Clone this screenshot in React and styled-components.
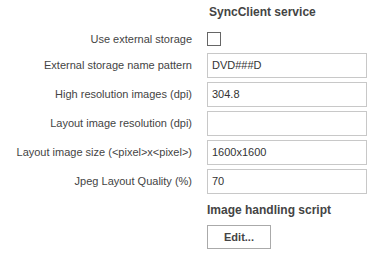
import React from "react";
import styled, { createGlobalStyle } from "styled-components";

const Global = createGlobalStyle`
  html, body { margin: 0; padding: 0; background: #fff; }
  body { font-family: "Liberation Sans", Arial, sans-serif; }
`;

const Form = styled.div`
  display: grid;
  grid-template-columns: 192px 160px;
  column-gap: 15px;
  padding-top: 4px;
`;

const Heading = styled.div`
  grid-column: 2;
  font-weight: bold;
  font-size: 12px;
  line-height: 16px;
  color: #444;
  padding-left: ${(p) => p.$indent || 0}px;
  margin-bottom: ${(p) => p.$mb || 0}px;
`;

const Label = styled.div`
  grid-column: 1;
  text-align: right;
  font-size: 11px;
  color: #444;
  height: ${(p) => p.$h}px;
  line-height: ${(p) => p.$h}px;
  white-space: nowrap;
  margin-bottom: ${(p) => p.$mb}px;
`;

const Cell = styled.div`
  grid-column: 2;
  height: ${(p) => p.$h}px;
  margin-bottom: ${(p) => p.$mb}px;
  display: flex;
  align-items: center;
`;

const Check = styled.div`
  width: 12px;
  height: 12px;
  border: 1px solid #666;
  background: #fff;
`;

const Input = styled.div`
  box-sizing: border-box;
  width: 160px;
  height: 25px;
  border: 1px solid #c8c8c8;
  padding-left: 4px;
  font-size: 11px;
  line-height: 23px;
  color: #333;
`;

const Button = styled.div`
  box-sizing: border-box;
  width: 64px;
  height: 24px;
  border: 1px solid #aaa;
  font-size: 11px;
  font-weight: bold;
  color: #444;
  text-align: center;
  line-height: 22px;
  background: #fff;
`;

const rows = [
  ["External storage name pattern", "DVD###D"],
  ["High resolution images (dpi)", "304.8"],
  ["Layout image resolution (dpi)", ""],
  ["Layout image size (<pixel>x<pixel>)", "1600x1600"],
  ["Jpeg Layout Quality (%)", "70"],
];

export default function App() {
  return (
    <>
      <Global />
      <Form>
        <Heading $indent={2} $mb={12}>SyncClient service</Heading>
        <Label $h={14} $mb={7}>Use external storage</Label>
        <Cell $h={14} $mb={7}>
          <Check />
        </Cell>
        {rows.map(([l, v], i) => (
          <React.Fragment key={l}>
            <Label $h={25} $mb={i === rows.length - 1 ? 8 : 4}>{l}</Label>
            <Cell $h={25} $mb={i === rows.length - 1 ? 8 : 4}>
              <Input>{v}</Input>
            </Cell>
          </React.Fragment>
        ))}
        <Heading $mb={7}>Image handling script</Heading>
        <Cell $h={24} $mb={0}>
          <Button>Edit...</Button>
        </Cell>
      </Form>
    </>
  );
}
